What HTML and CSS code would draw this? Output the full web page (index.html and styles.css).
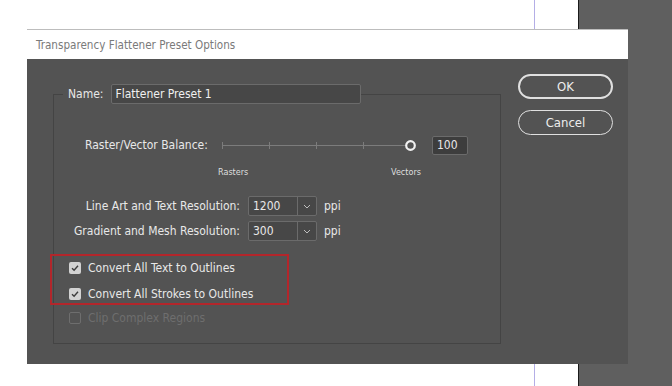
FILE: index.html
```html
<!DOCTYPE html>
<html lang="en">
<head>
  <meta charset="UTF-8" />
  <title>Transparency Flattener Preset Options</title>
  <link rel="stylesheet" href="styles.css">
</head>
<body>

<div class="workspace">
  <div class="canvas"></div>
  <div class="pasteboard"></div>
</div>

<div class="dialog">
  <div class="title-bar">Transparency Flattener Preset Options</div>

  <div class="dialog-body">
    <fieldset class="group">
      <legend>
        <label class="name-row">Name:
          <input type="text" class="text-field name-field" value="Flattener Preset 1" />
        </label>
      </legend>

      <div class="balance-row">
        <span class="balance-label">Raster/Vector Balance:</span>
        <svg class="slider" width="196" height="14" viewBox="0 0 196 14">
          <line x1="0" y1="7.5" x2="184" y2="7.5" stroke="#7c7c7c" stroke-width="1" />
          <line x1="0.5" y1="4" x2="0.5" y2="11" stroke="#7c7c7c" />
          <line x1="47.5" y1="4" x2="47.5" y2="11" stroke="#7c7c7c" />
          <line x1="94.5" y1="4" x2="94.5" y2="11" stroke="#7c7c7c" />
          <line x1="141.5" y1="4" x2="141.5" y2="11" stroke="#7c7c7c" />
          <circle cx="188.5" cy="7.5" r="4.3" fill="#535353" stroke="#f2f2f2" stroke-width="2.2" />
        </svg>
        <span class="value-box">100</span>
      </div>

      <div class="balance-ends">
        <span>Rasters</span>
        <span>Vectors</span>
      </div>

      <div class="res-row">
        <span class="res-label">Line Art and Text Resolution:</span>
        <div class="combo">
          <span class="combo-value">1200</span>
          <span class="combo-arrow">
            <svg width="8" height="5" viewBox="0 0 8 5"><path d="M1 1 L4 4 L7 1" fill="none" stroke="#bdbdbd" stroke-width="1" /></svg>
          </span>
        </div>
        <span class="unit">ppi</span>
      </div>

      <div class="res-row">
        <span class="res-label">Gradient and Mesh Resolution:</span>
        <div class="combo">
          <span class="combo-value">300</span>
          <span class="combo-arrow">
            <svg width="8" height="5" viewBox="0 0 8 5"><path d="M1 1 L4 4 L7 1" fill="none" stroke="#bdbdbd" stroke-width="1" /></svg>
          </span>
        </div>
        <span class="unit">ppi</span>
      </div>

      <div class="highlight">
        <div class="check-row">
          <span class="checkbox checked">
            <svg width="12" height="12" viewBox="0 0 12 12"><path d="M3 6.2 L5.1 8.3 L9 3.8" fill="none" stroke="#3c3c3c" stroke-width="1.4" /></svg>
          </span>
          Convert All Text to Outlines
        </div>
        <div class="check-row">
          <span class="checkbox checked">
            <svg width="12" height="12" viewBox="0 0 12 12"><path d="M3 6.2 L5.1 8.3 L9 3.8" fill="none" stroke="#3c3c3c" stroke-width="1.4" /></svg>
          </span>
          Convert All Strokes to Outlines
        </div>
      </div>

      <div class="check-row disabled">
        <span class="checkbox"></span>
        Clip Complex Regions
      </div>
    </fieldset>

    <div class="buttons">
      <button class="btn btn-default">OK</button>
      <button class="btn">Cancel</button>
    </div>
  </div>
</div>

</body>
</html>
```

FILE: styles.css
```css
body {
  margin: 0;
  font-family: "Liberation Sans Narrow", "DejaVu Sans Condensed", sans-serif;
  font-size: 12px;
  color: #e8e8e8;
  background: #ffffff;
  overflow: hidden;
}

.workspace {
  display: flex;
  height: 386px;
}

.canvas {
  width: 578px;
  background: linear-gradient(to right, transparent 534px, #b4aee6 534px, #b4aee6 535px, transparent 535px), #ffffff;
  border-right: 1px solid #1a1a1a;
}

.pasteboard {
  flex: 1;
  background: #5f5f5f;
}

.dialog {
  position: absolute;
  left: 27px;
  top: 29px;
  width: 601px;
  height: 335px;
  background: #535353;
  display: flex;
  flex-direction: column;
}

.title-bar {
  height: 30px;
  line-height: 30px;
  padding-left: 9px;
  background: #ffffff;
  color: #7a7a7a;
  font-size: 11.6px;
  border-top: 1px solid #bdbdbd;
  box-sizing: border-box;
}

.dialog-body {
  flex: 1;
  display: flex;
  align-items: flex-start;
  padding: 15px 15px 0 26px;
}

.group {
  width: 449px;
  height: 260px;
  box-sizing: border-box;
  margin: 10px 0 0;
  padding: 0;
  border: 1px solid #444444;
  min-width: 0;
}

.group legend {
  margin-left: 9px;
  padding: 0 0 0 5px;
}

.name-row {
  display: flex;
  align-items: center;
  gap: 7px;
}

.text-field {
  height: 20px;
  box-sizing: border-box;
  border: 1px solid #6b6b6b;
  border-radius: 2px;
  background: #474747;
  color: #f0f0f0;
  font: inherit;
  padding: 0 4px;
}

.name-field {
  width: 250px;
}

.balance-row {
  display: flex;
  align-items: center;
  height: 20px;
  margin-top: 31px;
  padding-left: 31px;
}

.balance-label {
  width: 137px;
}

.slider {
  display: block;
}

.value-box {
  margin-left: 14px;
  width: 36px;
  height: 19px;
  line-height: 17px;
  box-sizing: border-box;
  border: 1px solid #6b6b6b;
  border-radius: 2px;
  background: #3d3d3d;
  padding-left: 4px;
}

.balance-ends {
  display: flex;
  justify-content: space-between;
  width: 203px;
  margin: 12px 0 0 164px;
  font-size: 9px;
  color: #dedede;
}

.res-row {
  display: flex;
  align-items: center;
  height: 20px;
  margin-top: 5px;
}

.balance-ends + .res-row {
  margin-top: 19px;
}

.res-label {
  width: 186px;
  text-align: right;
}

.combo {
  display: flex;
  margin-left: 8px;
  width: 69px;
  height: 20px;
  box-sizing: border-box;
  border: 1px solid #6b6b6b;
  border-radius: 2px;
  background: #474747;
}

.combo-value {
  flex: 1;
  padding-left: 4px;
  line-height: 18px;
}

.combo-arrow {
  width: 18px;
  border-left: 1px solid #6b6b6b;
  display: flex;
  align-items: center;
  justify-content: center;
}

.unit {
  margin-left: 7px;
}

.highlight {
  margin: 13px 0 0 -4px;
  width: 239px;
  height: 51px;
  box-sizing: border-box;
  border: 2px solid #b3262b;
  padding: 0 0 0 17px;
}

.check-row {
  display: flex;
  align-items: center;
  gap: 7px;
  height: 24px;
  margin-bottom: 2px;
}

.checkbox {
  width: 12px;
  height: 12px;
  box-sizing: border-box;
  border-radius: 2px;
  border: 1px solid #6e6e6e;
  display: flex;
}

.checkbox.checked {
  border: none;
  background: #d2d2d2;
}

.check-row.disabled {
  color: #6e6e6e;
  padding-left: 15px;
  margin-top: 1px;
}

.buttons {
  display: flex;
  flex-direction: column;
  gap: 11px;
  margin-left: 17px;
}

.btn {
  width: 95px;
  height: 25px;
  border: 1px solid #e0e0e0;
  border-radius: 13px;
  background: transparent;
  color: #ededed;
  font: inherit;
  font-size: 13px;
  padding: 0;
}

.btn-default {
  border-width: 2px;
}
```
